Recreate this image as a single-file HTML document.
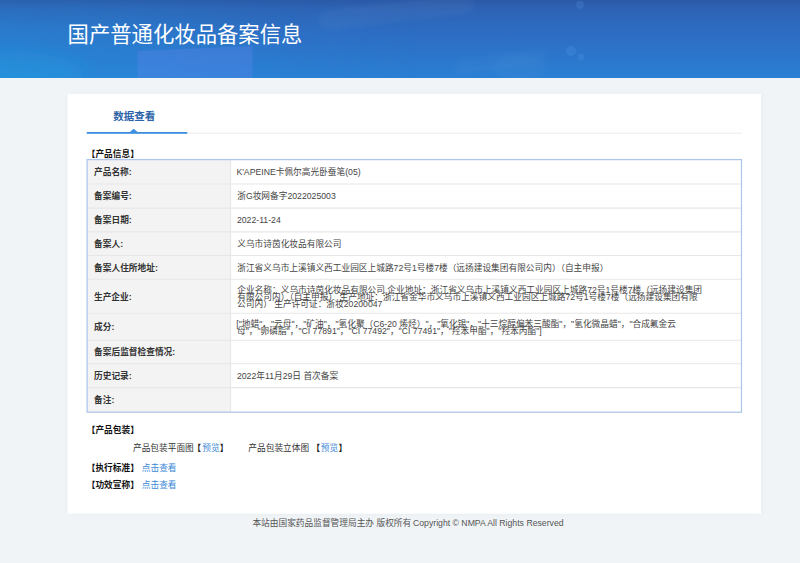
<!DOCTYPE html>
<html lang="zh-CN"><head><meta charset="utf-8"><title>国产普通化妆品备案信息</title>
<style>
html,body{margin:0;padding:0}
body{width:800px;height:563px;overflow:hidden;position:relative;background:#f0f4f7;font-family:"Liberation Sans","Noto Sans CJK SC",sans-serif}
h1,h3{margin:0;font-weight:normal}
a{text-decoration:none;cursor:pointer}
.hd{position:absolute;left:0;top:0;width:800px;height:77.5px;overflow:hidden;background:linear-gradient(180deg,#2b59a7 0%,#2d63b5 12%,#2d6cc2 40%,#2a7fd4 100%)}
.hd::before{content:"";position:absolute;left:0;top:0;width:100%;height:100%;background:linear-gradient(90deg,rgba(38,150,225,.36) 0,rgba(38,150,225,.27) 135px,rgba(38,150,225,.06) 300px,rgba(38,150,225,0) 420px);-webkit-mask-image:linear-gradient(180deg,rgba(0,0,0,.4) 0,#000 30px);mask-image:linear-gradient(180deg,rgba(0,0,0,.4) 0,#000 30px)}
.deco,.frame{position:absolute;left:0;top:0}
.card{position:absolute;left:68px;top:94px;width:693px;height:419px;background:#fff;box-shadow:0 0 4px rgba(120,140,160,.10)}
.frame{overflow:visible}
.ft{position:absolute;left:0;top:513.75px;width:800px;height:49px}
.t{position:absolute;display:block;white-space:nowrap;line-height:1;font-family:"Liberation Sans","Noto Sans CJK SC",sans-serif}
.t span{position:absolute;left:0;top:0;white-space:nowrap}
.b span{font-weight:bold}
</style></head><body>
<header class="hd"><svg class="deco" width="800" height="78" viewBox="0 0 800 78">
<defs><filter id="bl1" x="-10%" y="-50%" width="120%" height="200%"><feGaussianBlur stdDeviation="2"/></filter>
<filter id="bl3" x="-50%" y="-50%" width="200%" height="200%"><feGaussianBlur stdDeviation="9"/></filter>
<filter id="bl2" x="-10%" y="-50%" width="120%" height="200%"><feGaussianBlur stdDeviation="0.7"/></filter></defs>
<ellipse cx="10" cy="74" rx="75" ry="22" fill="#20a2e2" fill-opacity=".30" filter="url(#bl3)"/>
<polygon points="137.5,51 252.5,46 252.5,78 137.5,78" fill="#6686ee" fill-opacity=".30" filter="url(#bl2)"/>
<rect x="318" y="2" width="156" height="20" rx="10" transform="rotate(-6.5 396 12)" fill="#fff" fill-opacity=".03" filter="url(#bl1)"/>
<rect x="455" y="54" width="92" height="16" rx="8" transform="rotate(-8 500 62)" fill="#fff" fill-opacity=".02" filter="url(#bl1)"/>
<ellipse cx="520" cy="68" rx="26" ry="13" fill="#fff" fill-opacity=".025" filter="url(#bl1)"/>
<circle cx="580" cy="4.8" r="4" fill="#6fb0ff" fill-opacity=".14" filter="url(#bl2)"/>
<circle cx="571" cy="51" r="5" fill="#6fb0ff" fill-opacity=".14" filter="url(#bl2)"/>
<circle cx="581" cy="57" r="3.2" fill="#6fb0ff" fill-opacity=".15" filter="url(#bl2)"/>
</svg>
<h1 class="t" style="left:67.59px;top:24.62px;width:234.85px;height:21.35px;font-size:21.35px;color:#fff"><span>国产普通化妆品备案信息</span></h1>
</header>
<main class="card">
<svg class="frame" width="693" height="419" viewBox="0 0 693 419"><rect x="-0.5" y="-0.25" width="693.5" height="420" fill="#fff"/><line x1="19" x2="674" y1="39.2" y2="39.2" stroke="#ececec"/><rect x="18.75" y="38" width="100.5" height="1.8" fill="#3d8fe0"/><polygon points="61.5,38.3 65.7,34.7 69.9,38.3" fill="#3d8fe0"/><rect x="19.1" y="65.6" width="143.5" height="252.6" fill="#f3f3f3"/><line x1="19.1" x2="673.5" y1="90.0" y2="90.0" stroke="#e7e7e7" stroke-width="1.1"/><line x1="19.1" x2="673.5" y1="114.1" y2="114.1" stroke="#e7e7e7" stroke-width="1.1"/><line x1="19.1" x2="673.5" y1="137.9" y2="137.9" stroke="#e7e7e7" stroke-width="1.1"/><line x1="19.1" x2="673.5" y1="161.5" y2="161.5" stroke="#e7e7e7" stroke-width="1.1"/><line x1="19.1" x2="673.5" y1="185.3" y2="185.3" stroke="#e7e7e7" stroke-width="1.1"/><line x1="19.1" x2="673.5" y1="219.3" y2="219.3" stroke="#e7e7e7" stroke-width="1.1"/><line x1="19.1" x2="673.5" y1="246.2" y2="246.2" stroke="#e7e7e7" stroke-width="1.1"/><line x1="19.1" x2="673.5" y1="269.8" y2="269.8" stroke="#e7e7e7" stroke-width="1.1"/><line x1="19.1" x2="673.5" y1="293.6" y2="293.6" stroke="#e7e7e7" stroke-width="1.1"/><line x1="162.6" x2="162.6" y1="65.6" y2="318.2" stroke="#e6e6e6" stroke-width="1.1"/><rect x="19.1" y="65.6" width="654.4" height="252.6" fill="none" stroke="#adc6ea" stroke-width="1.25"/></svg>
<a class="t b" style="left:45.16px;top:17.15px;width:43.53px;height:10.50px;font-size:10.5px;color:#2b63a9"><span>数据查看</span></a><h3 class="t b" style="left:18.70px;top:55.85px;width:52.20px;height:8.70px;font-size:8.7px;color:#111"><span>【产品信息】</span></h3><div class="t b" style="left:26.04px;top:74.20px;width:37.80px;height:8.70px;font-size:8.7px;color:#333"><span>产品名称:</span></div><div class="t b" style="left:26.10px;top:98.45px;width:37.80px;height:8.70px;font-size:8.7px;color:#333"><span>备案编号:</span></div><div class="t b" style="left:26.10px;top:122.40px;width:37.80px;height:8.70px;font-size:8.7px;color:#333"><span>备案日期:</span></div><div class="t b" style="left:26.10px;top:146.10px;width:29.10px;height:8.70px;font-size:8.7px;color:#333"><span>备案人:</span></div><div class="t b" style="left:26.10px;top:169.80px;width:63.90px;height:8.70px;font-size:8.7px;color:#333"><span>备案人住所地址:</span></div><div class="t b" style="left:25.98px;top:198.70px;width:37.80px;height:8.70px;font-size:8.7px;color:#333"><span>生产企业:</span></div><div class="t b" style="left:26.03px;top:229.15px;width:20.40px;height:8.70px;font-size:8.7px;color:#333"><span>成分:</span></div><div class="t b" style="left:26.10px;top:254.40px;width:81.30px;height:8.70px;font-size:8.7px;color:#333"><span>备案后监督检查情况:</span></div><div class="t b" style="left:26.06px;top:278.10px;width:37.80px;height:8.70px;font-size:8.7px;color:#333"><span>历史记录:</span></div><div class="t b" style="left:26.10px;top:302.30px;width:20.40px;height:8.70px;font-size:8.7px;color:#333"><span>备注:</span></div><div class="t" style="left:168.42px;top:74.20px;width:124.11px;height:8.70px;font-size:8.7px;color:#454545"><span>K&#x27;APEINE卡佩尔高光卧蚕笔(05)</span></div><div class="t" style="left:169.21px;top:98.45px;width:99.95px;height:8.70px;font-size:8.7px;color:#454545"><span>浙G妆网备字2022025003</span></div><div class="t" style="left:168.94px;top:122.40px;width:46.73px;height:8.70px;font-size:8.7px;color:#454545"><span>2022-11-24</span></div><div class="t" style="left:169.23px;top:146.10px;width:104.40px;height:8.70px;font-size:8.7px;color:#454545"><span>义乌市诗茵化妆品有限公司</span></div><div class="t" style="left:169.21px;top:169.80px;width:375.52px;height:8.70px;font-size:8.7px;color:#454545"><span>浙江省义乌市上溪镇义西工业园区上城路72号1号楼7楼（远扬建设集团有限公司内）（自主申报）</span></div><div class="t" style="left:169.26px;top:191.76px;width:464.25px;height:8.70px;font-size:8.7px;color:#454545"><span>企业名称：义乌市诗茵化妆品有限公司 企业地址：浙江省义乌市上溪镇义西工业园区上城路72号1号楼7楼（远扬建设集团</span></div><div class="t" style="left:169.19px;top:198.70px;width:463.87px;height:8.70px;font-size:8.7px;color:#454545"><span>有限公司内）（自主申报） 生产地址：浙江省金华市义乌市上溪镇义西工业园区上城路72号1号楼7楼（远扬建设集团有限</span></div><div class="t" style="left:169.09px;top:205.64px;width:146.80px;height:8.70px;font-size:8.7px;color:#454545"><span>公司内） 生产许可证：浙妆20200047</span></div><div class="t" style="left:168.32px;top:225.68px;width:450.93px;height:8.70px;font-size:8.7px;color:#454545"><span>[&quot;地蜡&quot;，&quot;云母&quot;，&quot;矿油&quot;，&quot;氢化聚（C6-20 烯烃）&quot;，&quot;氧化锡&quot;，&quot;十三烷醇偏苯三酸酯&quot;，&quot;氢化微晶蜡&quot;，&quot;合成氟金云</span></div><div class="t" style="left:169.03px;top:232.62px;width:315.44px;height:8.70px;font-size:8.7px;color:#454545"><span>母&quot;，&quot;卵磷脂&quot;，&quot;CI 77891&quot;，&quot;CI 77492&quot;，&quot;CI 77491&quot;，&quot;羟苯甲酯&quot;，&quot;羟苯丙酯&quot;]</span></div><div class="t" style="left:168.94px;top:278.10px;width:103.30px;height:8.70px;font-size:8.7px;color:#454545"><span>2022年11月29日 首次备案</span></div><h3 class="t b" style="left:18.70px;top:332.45px;width:52.20px;height:8.70px;font-size:8.7px;color:#111"><span>【产品包装】</span></h3><div class="t" style="left:64.94px;top:349.85px;width:60.90px;height:8.70px;font-size:8.7px;color:#333"><span>产品包装平面图</span></div><div class="t b" style="left:124.51px;top:349.85px;width:8.70px;height:8.70px;font-size:8.7px;color:#222"><span>【</span></div><a class="t" style="left:134.21px;top:349.85px;width:17.40px;height:8.70px;font-size:8.7px;color:#3a88d8"><span>预览</span></a><div class="t b" style="left:151.81px;top:349.85px;width:8.70px;height:8.70px;font-size:8.7px;color:#222"><span>】</span></div><div class="t" style="left:180.34px;top:349.85px;width:60.90px;height:8.70px;font-size:8.7px;color:#333"><span>产品包装立体图</span></div><div class="t b" style="left:243.51px;top:349.85px;width:8.70px;height:8.70px;font-size:8.7px;color:#222"><span>【</span></div><a class="t" style="left:252.81px;top:349.85px;width:17.40px;height:8.70px;font-size:8.7px;color:#3a88d8"><span>预览</span></a><div class="t b" style="left:270.41px;top:349.85px;width:8.70px;height:8.70px;font-size:8.7px;color:#222"><span>】</span></div><h3 class="t b" style="left:18.70px;top:369.95px;width:52.20px;height:8.70px;font-size:8.7px;color:#111"><span>【执行标准】</span></h3><a class="t" style="left:73.77px;top:369.95px;width:34.80px;height:8.70px;font-size:8.7px;color:#3a88d8"><span>点击查看</span></a><h3 class="t b" style="left:18.70px;top:387.35px;width:52.20px;height:8.70px;font-size:8.7px;color:#111"><span>【功效宣称】</span></h3><a class="t" style="left:73.77px;top:387.35px;width:34.80px;height:8.70px;font-size:8.7px;color:#3a88d8"><span>点击查看</span></a>
</main>
<footer class="ft"><div class="t" style="left:252.42px;top:4.90px;width:158.67px;height:8.70px;font-size:8.7px;color:#555"><span>本站由国家药品监督管理局主办 版权所有</span></div><div class="t" style="left:412.96px;top:4.90px;width:163.89px;height:8.70px;font-size:8.7px;color:#555"><span>Copyright © NMPA All Rights Reserved</span></div></footer>
</body></html>
